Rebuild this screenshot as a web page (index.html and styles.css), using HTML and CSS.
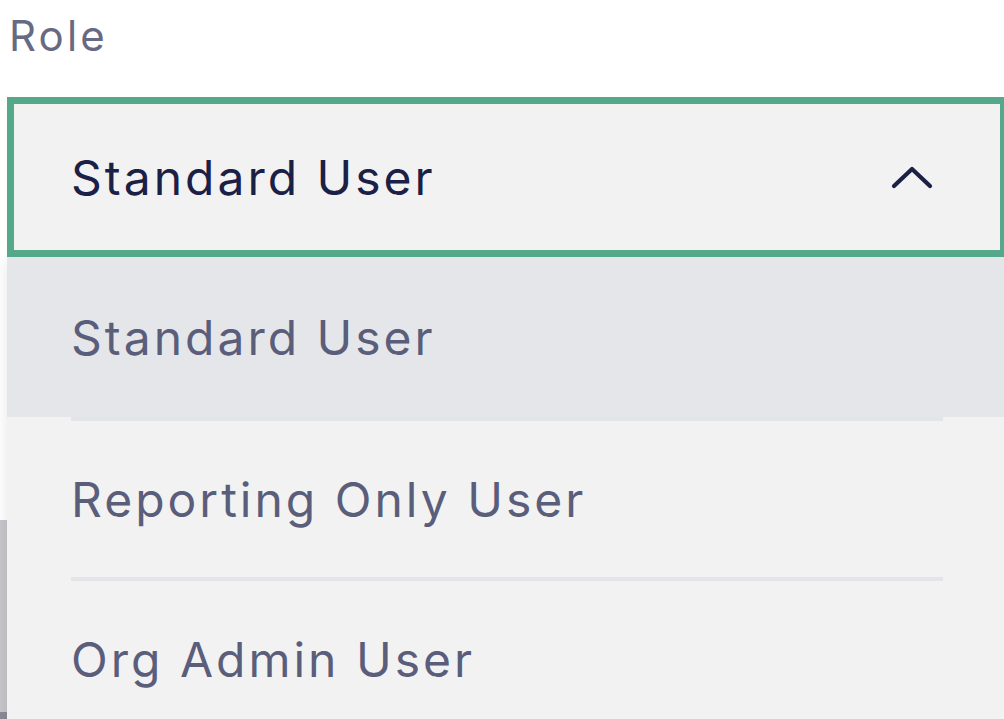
FILE: index.html
```html
<!DOCTYPE html>
<html lang="en">
<head>
<meta charset="utf-8">
<title>Role select</title>
<link rel="stylesheet" href="styles.css">
</head>
<body>
<div class="backdrop"></div>
<div class="field">
  <div class="label">Role</div>
  <div class="select">
    <span class="select-value">Standard User</span>
    <svg class="chevron" width="44" height="26" viewBox="0 0 44 26" aria-hidden="true">
      <polyline points="4,22 22,5 40,22" fill="none" stroke="#1b2146" stroke-width="4.2" stroke-linecap="round" stroke-linejoin="round"/>
    </svg>
  </div>
  <ul class="options">
    <li class="option option-active"><span class="option-text">Standard User</span></li>
    <li class="option"><span class="option-text">Reporting Only User</span></li>
    <li class="option"><span class="option-text">Org Admin User</span></li>
  </ul>
</div>
</body>
</html>
```

FILE: styles.css
```css
html, body {
  margin: 0;
  padding: 0;
  background: #ffffff;
  overflow: hidden;
  width: 1004px;
  height: 719px;
}

body {
  font-family: Inter, Roboto, "Liberation Sans", sans-serif;
  font-weight: 380;
  position: relative;
}

.backdrop {
  position: absolute;
  left: 0;
  top: 520px;
  width: 7px;
  height: 199px;
  background: linear-gradient(to bottom, #c6c6cb 0, #c6c6cb 192px, #8a8b96 192px);
}

.field {
  margin-left: 7px;
  width: 1000px;
  position: relative;
}

.label {
  font-size: 42px;
  line-height: 43px;
  color: #666a82;
  padding: 14px 0 0 2px;
  height: 97px;
  box-sizing: border-box;
  letter-spacing: 3.2px;
}

.select {
  height: 160px;
  box-sizing: border-box;
  border: 7.5px solid #55a98a;
  background: #f2f2f2;
  display: flex;
  align-items: center;
  justify-content: space-between;
  padding: 0 66px 0 57px;
}

.select-value {
  font-size: 48px;
  color: #1b2146;
  letter-spacing: 3px;
}

.chevron {
  display: block;
  margin-top: 0;
}

.options {
  list-style: none;
  margin: 0;
  padding: 0;
  background: #f2f2f2;
  box-shadow: -4px 4px 10px rgba(0, 0, 0, 0.06);
}

.option {
  height: 160px;
  box-sizing: border-box;
  display: flex;
  align-items: center;
  padding: 0 64px;
}

.option + .option {
  padding: 0;
}

.option + .option .option-text {
  border-top: 4px solid #e4e5e9;
  margin: 0 64px;
  flex: 1;
  height: 100%;
  display: flex;
  align-items: center;
  box-sizing: border-box;
}

.option-active {
  background: #e5e6ea;
}

.option-text {
  font-size: 48px;
  color: #5a5e7b;
  letter-spacing: 3px;
}
```
